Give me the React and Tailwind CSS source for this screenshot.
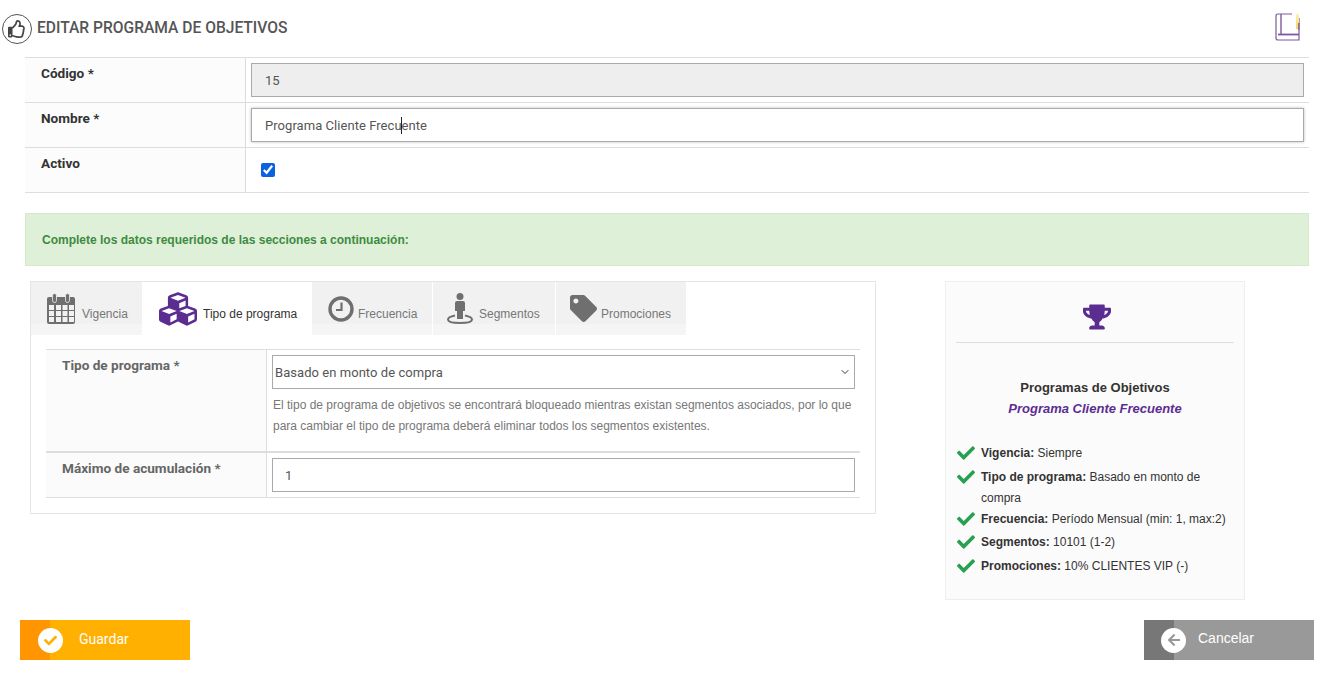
import React from 'react';
import { FaRegThumbsUp, FaCubes, FaTag, FaTrophy, FaCheck, FaArrowLeft } from 'react-icons/fa';
import { ChevronDown } from 'lucide-react';

const roboto = 'font-["Roboto",sans-serif]';
const arial = 'font-["Liberation_Sans",Arial,sans-serif]';

const CalendarIcon = () => (
  <svg width="30" height="31" viewBox="0 0 30 31" fill="none">
    <rect x="1" y="4" width="28" height="27" rx="2" fill="#6f6f6f" />
    <rect x="6.5" y="0.5" width="4" height="9" rx="2" fill="#6f6f6f" stroke="#f1f1f1" strokeWidth="0.8" />
    <rect x="19.5" y="0.5" width="4" height="9" rx="2" fill="#6f6f6f" stroke="#f1f1f1" strokeWidth="0.8" />
    <g fill="#f1f1f1">
      {[12, 18, 24].map((y) =>
        [3, 10, 16.5, 23].map((x) => <rect key={x + '-' + y} x={x} y={y} width="5" height="5" />)
      )}
    </g>
  </svg>
);

const ClockIcon = () => (
  <svg width="26" height="26" viewBox="0 0 26 26" fill="none">
    <circle cx="13" cy="13" r="11" stroke="#6f6f6f" strokeWidth="3.4" />
    <path d="M13.5 6.5V14H8" stroke="#6f6f6f" strokeWidth="2.2" />
  </svg>
);

const PersonIcon = () => (
  <svg width="26" height="31" viewBox="0 0 26 31" fill="none">
    <circle cx="13" cy="3.5" r="3.5" fill="#6f6f6f" />
    <path d="M8 10Q8 8 10 8H16Q18 8 18 10V18H16V26H10V18H8Z" fill="#6f6f6f" />
    <path d="M8 22.5C3 23.5 1 25 1 26.5C1 28.8 6 30 13 30C20 30 25 28.8 25 26.5C25 25 23 23.5 18 22.5" stroke="#6f6f6f" strokeWidth="2" />
  </svg>
);

const BookIcon = () => (
  <svg width="26" height="28" viewBox="0 0 26 28" fill="none">
    <defs>
      <linearGradient id="shine" x1="0" y1="0" x2="0" y2="1">
        <stop offset="0" stopColor="#fdf0b0" />
        <stop offset="1" stopColor="#f5d860" />
      </linearGradient>
    </defs>
    <path d="M24 5V27H3Q1 27 1 25V3Q1 1 3 1H17" stroke="#7d5a9e" strokeWidth="1.2" />
    <path d="M6 1V21" stroke="#7d5a9e" strokeWidth="1.4" />
    <path d="M3 21.5H24" stroke="#7d5a9e" strokeWidth="1.8" />
    <rect x="21" y="1" width="3" height="15" fill="url(#shine)" />
    <rect x="23" y="10" width="1.6" height="7" fill="#8d6f8e" />
  </svg>
);

const FormRow = ({ label, children }) => (
  <div className="flex border-b border-[#dddddd]">
    <div className={`w-[221px] shrink-0 bg-[#fcfcfc] border-r border-[#dddddd] pl-[16px] pt-[5px] text-[13.6px] leading-5 font-bold text-[#333333] ${roboto}`}>
      {label}
    </div>
    <div className="flex-1 h-[44px] pl-[5px] pr-[5px] pt-[5px]">{children}</div>
  </div>
);

const tabs = [
  { name: 'Vigencia', icon: <CalendarIcon />, w: 'w-[112px]', pl: 'pl-[15px]', gap: 'gap-[6px]' },
  { name: 'Tipo de programa', icon: <FaCubes className="text-[38px] text-[#5c2d91]" />, w: 'w-[169px]', pl: 'pl-[16px]', gap: 'gap-[6px]', active: true },
  { name: 'Frecuencia', icon: <ClockIcon />, w: 'w-[121px]', pl: 'pl-[16px]', gap: 'gap-[4px]' },
  { name: 'Segmentos', icon: <PersonIcon />, w: 'w-[123px]', pl: 'pl-[14px]', gap: 'gap-[6px]' },
  { name: 'Promociones', icon: <FaTag className="text-[27px] text-[#6f6f6f]" />, w: 'w-[131px]', pl: 'pl-[14px]', gap: 'gap-[4px]' },
];

const resumen = [
  { label: 'Vigencia:', text: 'Siempre', mb: 'mb-[3px]' },
  { label: 'Tipo de programa:', text: 'Basado en monto de compra', mb: 'mb-0' },
  { label: 'Frecuencia:', text: 'Período Mensual (min: 1, max:2)', mb: 'mb-[2px]' },
  { label: 'Segmentos:', text: '10101 (1-2)', mb: 'mb-[3px]' },
  { label: 'Promociones:', text: '10% CLIENTES VIP (-)', mb: 'mb-0' },
];

const App = () => {
  return (
    <div className={`w-[1330px] h-[688px] bg-white overflow-hidden ${roboto}`}>
      {/* encabezado */}
      <div className="flex items-center justify-between h-[57px] pl-[2px] pr-[29px]">
        <div className="flex items-center gap-[5px]">
          <div className="w-[30px] h-[30px] rounded-full border border-[#555555] flex items-center justify-center text-[#444444] text-[18px]">
            <FaRegThumbsUp />
          </div>
          <h1 className="text-[15.6px] font-medium text-[#555555]">EDITAR PROGRAMA DE OBJETIVOS</h1>
        </div>
        <div className="-mt-[3px]">
          <BookIcon />
        </div>
      </div>

      <div className="ml-[25px] w-[1284px]">
        <div className="border-t border-[#dddddd]">
          <FormRow label="Código *">
            <input
              readOnly
              value="15"
              className="w-full h-[34px] bg-[#eeeeee] border border-[#aaaaaa] px-[13px] text-[13px] text-[#555555] tracking-[0.05px] outline-none"
            />
          </FormRow>
          <FormRow label="Nombre *">
            <div className="relative">
              <input
                readOnly
                value="Programa Cliente Frecuente"
                className="w-full h-[34px] bg-white border border-[#aaaaaa] px-[13px] text-[13px] text-[#555555] tracking-[0.05px] outline-none shadow-[0_0_3px_rgba(0,0,0,0.25)]"
              />
              <span className="absolute left-[150px] top-[9px] w-px h-[17px] bg-[#222222]" />
            </div>
          </FormRow>
          <FormRow label="Activo">
            <input type="checkbox" checked readOnly className="w-[14px] h-[14px] ml-[10px] mt-[10px] block accent-[#0b62e0]" />
          </FormRow>
        </div>

        <div className={`mt-[20px] h-[53px] bg-[#dff0d8] border border-[#d6e9c6] flex items-center pl-[16px] text-[12px] font-bold text-[#3d8b40] ${arial}`}>
          Complete los datos requeridos de las secciones a continuación:
        </div>
      </div>

      <div className="flex items-start mt-[15px] ml-[30px]">
        {/* pestañas */}
        <div className="w-[846px] h-[233px] border border-[#e5e5e5]">
          <div className={`flex h-[53px] text-[12px] ${arial}`}>
            {tabs.map((tab) => (
              <div
                key={tab.name}
                className={`${tab.w} ${tab.pl} ${tab.gap} flex items-center border-r border-white ${
                  tab.active ? 'bg-white text-[#333333]' : 'bg-[linear-gradient(#f1f1f1_80%,#f5f5f5_80%)] text-[#777777]'
                }`}
              >
                <span className="shrink-0">{tab.icon}</span>
                <span className="pt-[10px]">{tab.name}</span>
              </div>
            ))}
          </div>
          <div className="mt-[14px] mx-[15px] border-t border-[#dddddd]">
            <div className="flex border-b-2 border-[#dddddd]">
              <div className={`w-[221px] shrink-0 bg-[#fbfbfb] border-r border-[#dddddd] pl-[16px] pt-[5px] text-[13.6px] leading-5 font-bold text-[#666666] ${roboto}`}>
                Tipo de programa *
              </div>
              <div className="flex-1 h-[101px] pl-[5px] pr-[5px] pt-[5px]">
                <div className="relative">
                  <select
                    className={`w-full h-[34px] appearance-none bg-white border border-[#aaaaaa] pl-[2px] pt-[2px] text-[13px] text-[#555555] tracking-[0.05px] outline-none ${roboto}`}
                    defaultValue="monto"
                  >
                    <option value="monto">Basado en monto de compra</option>
                  </select>
                  <ChevronDown className="absolute right-[4px] top-[11px] w-[12px] h-[12px] text-[#333333]" />
                </div>
                <p className={`mt-[6px] pl-px text-[12px] leading-[21px] text-[#777777] ${arial}`}>
                  El tipo de programa de objetivos se encontrará bloqueado mientras existan segmentos asociados, por lo que para cambiar el tipo de programa deberá eliminar todos los segmentos existentes.
                </p>
              </div>
            </div>
            <div className="flex border-b border-[#dddddd]">
              <div className={`w-[221px] shrink-0 bg-[#fbfbfb] border-r border-[#dddddd] pl-[16px] pt-[5px] text-[13.6px] leading-5 font-bold text-[#666666] ${roboto}`}>
                Máximo de acumulación *
              </div>
              <div className="flex-1 h-[44px] pl-[5px] pr-[5px] pt-[5px]">
                <input readOnly value="1" className="w-full h-[34px] bg-white border border-[#aaaaaa] px-[12px] text-[13px] text-[#555555] outline-none" />
              </div>
            </div>
          </div>
        </div>

        {/* resumen */}
        <div className={`ml-[69px] w-[300px] h-[319px] bg-[#fbfbfb] border border-[#eeeeee] px-[10px] text-[12px] text-[#333333] ${arial}`}>
          <div className="h-[61px] border-b border-[#dddddd] flex items-center justify-center pt-[9px] pl-[4px]">
            <FaTrophy className="text-[28px] text-[#5c2d91]" />
          </div>
          <div className="mt-[34px] text-center text-[13px] leading-[21px]">
            <div className="font-bold">Programas de Objetivos</div>
            <div className="font-bold italic text-[#5c2d91]">Programa Cliente Frecuente</div>
          </div>
          <ul className="mt-[24px] pl-px">
            {resumen.map((item) => (
              <li key={item.label} className={`flex items-start gap-[6px] leading-[21px] ${item.mb}`}>
                <FaCheck className="shrink-0 mt-[1px] text-[18px] text-[#27a050]" />
                <span>
                  <b>{item.label}</b> {item.text}
                </span>
              </li>
            ))}
          </ul>
        </div>
      </div>

      {/* botones */}
      <div className="flex justify-between mt-[20px] ml-[20px] mr-[16px]">
        <button className="flex items-center w-[170px] h-[40px] bg-[#ffb000] text-white text-[14px]">
          <span className="w-[30px] h-full bg-[#ff9500] shrink-0" />
          <span className="w-[25px] h-[25px] -ml-[12px] rounded-full bg-white flex items-center justify-center text-[#ffb000] text-[13px]">
            <FaCheck />
          </span>
          <span className="ml-[16px] -mt-[1px]">Guardar</span>
        </button>
        <button className={`flex items-center w-[170px] h-[40px] bg-[#999999] text-white text-[14px] ${arial}`}>
          <span className="w-[30px] h-full bg-[#777777] shrink-0" />
          <span className="w-[25px] h-[25px] -ml-[13px] rounded-full bg-white flex items-center justify-center text-[#999999] text-[14px]">
            <FaArrowLeft />
          </span>
          <span className="ml-[12px] -mt-[4px]">Cancelar</span>
        </button>
      </div>
    </div>
  );
};

export default App;
